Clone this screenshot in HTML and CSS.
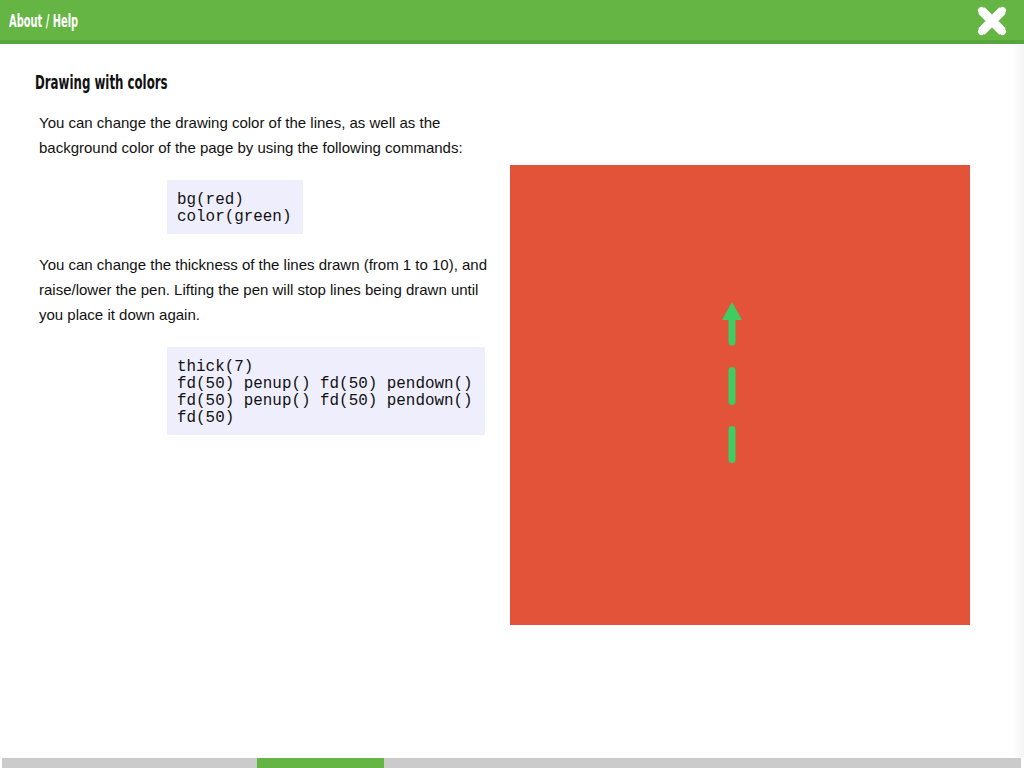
FILE: index.html
```html
<!DOCTYPE html>
<html>
<head>
<meta charset="utf-8">
<title>About / Help</title>
<link rel="stylesheet" href="styles.css">
</head>
<body>
<div class="page">
  <header class="topbar">
    <div class="title"><span class="narrow">About / Help</span></div>
    <button class="close" aria-label="Close">
      <svg width="30" height="30" viewBox="0 0 30 30">
        <path d="M4.5 4.5 L25.5 25.5 M25.5 4.5 L4.5 25.5" stroke="#fff" stroke-width="9" stroke-linecap="butt" fill="none"/>
        <path d="M4.5 4.5 L25.5 25.5 M25.5 4.5 L4.5 25.5" stroke="#fff" stroke-width="7" stroke-linecap="round" fill="none"/>
      </svg>
    </button>
  </header>
  <main class="content">
    <section class="text-col">
      <h2 class="heading"><span class="narrow">Drawing with colors</span></h2>
      <p class="para">You can change the drawing color of the lines, as well as the background color of the page by using the following commands:</p>
      <pre class="code">bg(red)
color(green)</pre>
      <p class="para">You can change the thickness of the lines drawn (from 1 to 10), and raise/lower the pen. Lifting the pen will stop lines being drawn until you place it down again.</p>
      <pre class="code">thick(7)
fd(50) penup() fd(50) pendown()
fd(50) penup() fd(50) pendown()
fd(50)</pre>
    </section>
    <section class="canvas-col">
      <div class="canvas">
        <svg width="460" height="460" viewBox="0 0 460 460">
          <g stroke="#3ecd60" stroke-width="7" stroke-linecap="round" fill="none">
            <line x1="222" y1="264.5" x2="222" y2="294.5"/>
            <line x1="222" y1="205.5" x2="222" y2="236.5"/>
            <line x1="222" y1="152" x2="222" y2="177"/>
          </g>
          <polygon points="222,137 232,155 212,155" fill="#3ecd60"/>
        </svg>
      </div>
    </section>
  </main>
  <footer class="progress">
    <span class="seg seg-a"></span>
    <span class="seg seg-on"></span>
    <span class="seg seg-b"></span>
  </footer>
  <div class="edge-shade"></div>
</div>
</body>
</html>
```

FILE: styles.css
```css
html, body {
  margin: 0;
  padding: 0;
  background: #ffffff;
}

.page {
  position: relative;
  height: 768px;
  display: flex;
  flex-direction: column;
  overflow: hidden;
}

.topbar {
  height: 40px;
  background: #64b543;
  border-bottom: 4px solid #58a53b;
  display: flex;
  align-items: center;
  justify-content: space-between;
  padding: 0 17px 0 9px;
  flex: none;
}

.narrow {
  display: inline-block;
  transform-origin: left center;
}

.title {
  font-family: "DejaVu Sans Condensed", "DejaVu Sans", sans-serif;
  font-stretch: condensed;
  font-weight: bold;
  font-size: 18px;
  color: #ffffff;
  padding-top: 1px;
}

.title .narrow {
  transform: scaleX(0.61);
}

.close {
  background: none;
  border: 0;
  padding: 0;
  width: 30px;
  height: 30px;
  display: block;
  margin-top: 2px;
}

.close svg {
  display: block;
}

.content {
  flex: 1;
  display: flex;
  padding: 26px 54px 0 35px;
}

.text-col {
  width: 455px;
  flex: none;
}

.heading {
  margin: 0 0 16px 0;
  font-family: "DejaVu Sans Condensed", "DejaVu Sans", sans-serif;
  font-stretch: condensed;
  font-weight: bold;
  font-size: 19px;
  line-height: 24px;
  color: #111111;
}

.heading .narrow {
  transform: scaleX(0.69);
}

.para {
  margin: 0 0 20px 0;
  padding-left: 4px;
  font-family: "Liberation Sans", Arial, sans-serif;
  font-size: 15px;
  line-height: 25px;
  color: #111111;
}

.code {
  display: inline-block;
  margin: 0 0 18px 132px;
  padding: 12px 12px 8px 10px;
  background: #eeeefd;
  font-family: "Liberation Mono", "Courier New", monospace;
  font-size: 15.9px;
  line-height: 17px;
  color: #111111;
}

.canvas-col {
  flex: 1;
  padding: 95px 0 0 20px;
}

.canvas {
  width: 460px;
  height: 460px;
  background: #e2533a;
}

.canvas svg {
  display: block;
}

.progress {
  flex: none;
  height: 10px;
  margin: 0 3px 0 2px;
  display: flex;
}

.seg {
  display: block;
  height: 10px;
}

.seg-a {
  width: 255px;
  background: #cbcbcb;
}

.seg-on {
  width: 127px;
  background: #64b543;
}

.seg-b {
  flex: 1;
  background: #cbcbcb;
}

.edge-shade {
  position: absolute;
  right: 0;
  top: 44px;
  bottom: 10px;
  width: 12px;
  background: linear-gradient(to right, rgba(0,0,0,0), rgba(0,0,0,0.045));
  pointer-events: none;
}
```
